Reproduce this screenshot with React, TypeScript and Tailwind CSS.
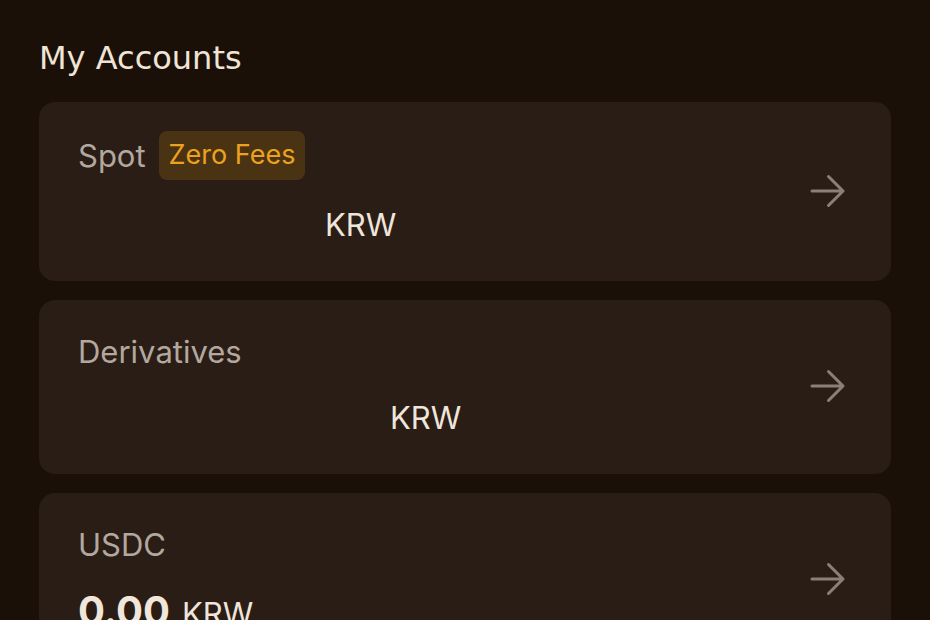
/**
 * My Accounts list
 *
 * Account cards with title, optional badge, balance and a chevron arrow.
 */

import React from 'react'

interface Account {
  title: string
  badge?: string
  amount?: string
  spacer: string
}

const accounts: Account[] = [
  { title: 'Spot', badge: 'Zero Fees', spacer: 'w-[235px]' },
  { title: 'Derivatives', spacer: 'w-[300px]' },
  { title: 'USDC', amount: '0.00', spacer: '' },
]

const ArrowIcon: React.FC = () => (
  <svg className="mt-[5px] shrink-0" width="36" height="34" viewBox="0 0 36 34" fill="none">
    <path
      d="M2 17H33M18.5 2.5L33 17L18.5 31.5"
      stroke="#8b8079"
      strokeWidth="3"
      strokeLinecap="round"
      strokeLinejoin="round"
    />
  </svg>
)

const AccountCard: React.FC<{ account: Account }> = ({ account }) => (
  <div className="flex items-center justify-between rounded-2xl bg-[#2a1d15] pl-[39px] pr-[45px] pt-[29px] pb-[36px]">
    <div className="flex flex-col gap-[23px]">
      {/* Title row */}
      <div className="flex min-h-[46px] items-center gap-[13px]">
        <span className="text-[31px] leading-[40px] text-[#b3a89f]">{account.title}</span>
        {account.badge && (
          <span className="flex h-[49px] items-center rounded-lg bg-[#4a3313] px-[10px] text-[27px] text-[#eda21f]">
            {account.badge}
          </span>
        )}
      </div>

      {/* Balance row */}
      <div className={`flex h-[40px] items-baseline gap-[12px] ${account.badge ? 'mt-[2px]' : ''}`}>
        {account.amount ? (
          <span className="text-[40px] font-bold leading-[40px] text-[#f1e6da]">{account.amount}</span>
        ) : (
          <span className={`${account.spacer} inline-block`} />
        )}
        <span className="text-[31px] leading-[40px] text-[#efe5db]">KRW</span>
      </div>
    </div>

    <ArrowIcon />
  </div>
)

export default function App() {
  return (
    <div
      className="h-[620px] w-[930px] overflow-hidden bg-[#1b1008] px-[39px] pt-[38px]"
      style={{ fontFamily: 'Inter, "Noto Sans", sans-serif' }}
    >
      <h1
        className="mb-[24px] h-[40px] text-[32px] leading-[40px] text-[#efe4d6]"
        style={{ fontFamily: '"DejaVu Sans", sans-serif' }}
      >
        My Accounts
      </h1>

      <div className="flex flex-col gap-[19px]">
        {accounts.map((account) => (
          <AccountCard key={account.title} account={account} />
        ))}
      </div>
    </div>
  )
}
